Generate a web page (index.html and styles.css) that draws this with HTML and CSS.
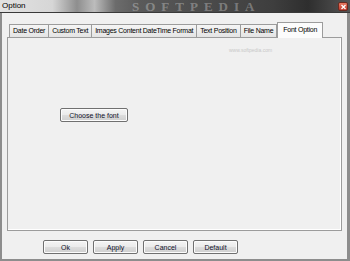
FILE: index.html
```html
<!DOCTYPE html>
<html>
<head>
<meta charset="utf-8">
<link rel="stylesheet" href="styles.css">
</head>
<body>
<div class="window">
  <div class="titlebar">
    <span class="title">Option</span>
    <span class="brand">SOFTPEDIA</span>
    <span class="close"><svg width="7" height="6" viewBox="0 0 7 6"><path d="M1.5 1 L5.5 5 M5.5 1 L1.5 5" stroke="#fff" stroke-width="1.3"/></svg></span>
  </div>
  <div class="frame">
    <div class="tabs">
      <div class="tab">Date Order</div>
      <div class="tab">Custom Text</div>
      <div class="tab">Images Content DateTime Format</div>
      <div class="tab">Text Position</div>
      <div class="tab">File Name</div>
      <div class="tab active">Font Option</div>
    </div>
    <div class="panel">
      <span class="wm">www.softpedia.com</span>
      <button class="btn choose">Choose the font</button>
    </div>
    <div class="actions">
      <button class="btn">Ok</button>
      <button class="btn">Apply</button>
      <button class="btn">Cancel</button>
      <button class="btn">Default</button>
    </div>
  </div>
</div>
</body>
</html>
```
FILE: styles.css
```css
* { box-sizing: border-box; }
html, body { margin: 0; padding: 0; }
body { width: 350px; height: 261px; overflow: hidden; font-family: "Liberation Sans", Arial, sans-serif; }
.window { width: 350px; height: 261px; display: flex; flex-direction: column; background: #f0f0f0; }
.titlebar {
  position: relative; height: 13px; flex: none;
  background: linear-gradient(90deg, #e2e2e2 0%, #d6d6d6 15%, #8e8e8e 22%, #bcbcbc 27%, #6c6c6c 33%, #5a5a5a 40%, #4a4a4a 60%, #3e3e3e 78%, #2e2e2e 88%, #555 100%);
  border-bottom: 1px solid #3a3a3a;
  overflow: hidden;
}
.title { position: absolute; left: 2px; top: 1px; font-size: 8px; line-height: 10px; color: #000; z-index: 2; }
.brand { position: absolute; left: 132px; top: 0; font-family: "Liberation Serif", serif; font-size: 13px; line-height: 13px; letter-spacing: 6px; color: rgba(255,255,255,0.3); font-weight: bold; }
.close { position: absolute; right: 2px; top: 2px; width: 10px; height: 9px; background: linear-gradient(#e77a62, #c2382a); border: 1px solid #6b2a20; border-radius: 2px; display: flex; align-items: center; justify-content: center; }
.frame {
  flex: 1; display: flex; flex-direction: column;
  border-left: 2px solid #8d8d8d; border-right: 3px solid #8d8d8d; border-bottom: 2px solid #8d8d8d;
  padding: 9px 5px 5px 5px;
}
.tabs { display: flex; align-items: flex-end; height: 15px; padding-left: 2px; flex: none; }
.tab {
  height: 13px; padding: 0 3px; font-size: 7px; letter-spacing: -0.25px; line-height: 12px; color: #000;
  border: 1px solid #9c9c9c; border-bottom: none; margin-right: -1px;
  background: linear-gradient(#f5f5f5, #e4e4e4); white-space: nowrap;
}
.tab.active { height: 16px; margin-bottom: -1px; margin-left: 1px; padding: 1px 5px 0; background: #fcfcfc; position: relative; z-index: 1; }
.panel {
  flex: 1; position: relative; border: 1px solid #9c9c9c; background: #f0f0f0;
  padding: 70px 0 0 52px;
  box-shadow: inset -1px -1px 0 #fff;
}
.wm { position: absolute; left: 221px; top: 9px; font-size: 5px; color: #c8c8c8; }
.btn {
  font-family: "Liberation Sans", Arial, sans-serif; font-size: 7px; color: #10102a;
  height: 14px; padding: 0; border: 1px solid #707070; border-radius: 2px;
  background: linear-gradient(#f4f4f4 0%, #ebebeb 50%, #dddddd 51%, #cfcfcf 100%);
  box-shadow: inset 0 0 0 1px #fcfcfc;
}
.choose { width: 68px; display: block; }
.actions { display: flex; gap: 5px; padding-left: 36px; margin-top: 9px; flex: none; }
.actions .btn { width: 45px; }
```
